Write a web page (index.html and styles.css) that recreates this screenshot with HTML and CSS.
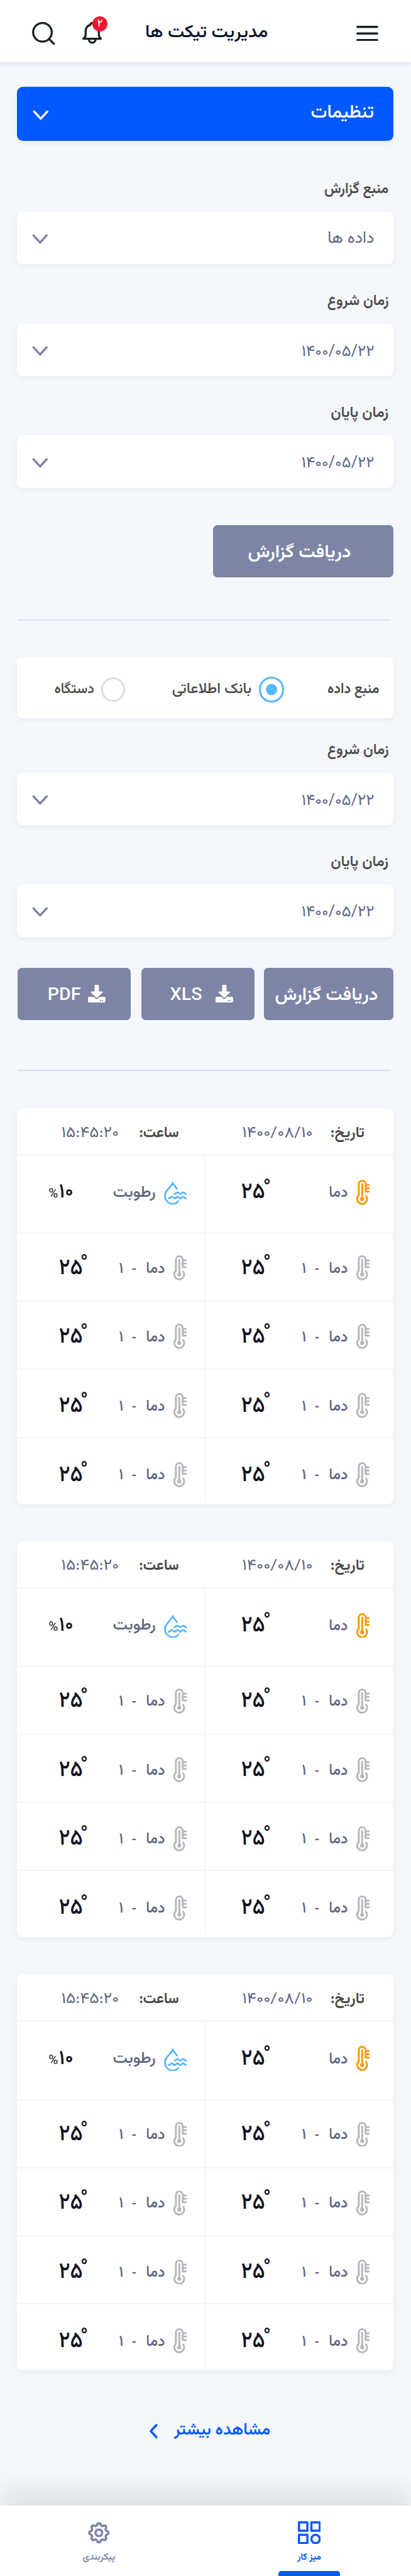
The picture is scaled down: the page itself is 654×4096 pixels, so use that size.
FILE: index.html
```html
<!DOCTYPE html>
<html lang="fa" dir="rtl">
<head>
<meta charset="utf-8">
<title>مدیریت تیکت ها</title>
<link rel="stylesheet" href="styles.css">
</head>
<body>
<svg class="sprite" aria-hidden="true">
  <symbol id="thermo" viewBox="0 0 110 206">
    <g fill="none" stroke="currentColor" stroke-width="15.5" stroke-linecap="round" stroke-linejoin="round">
      <path d="M80 133A40.5 40.5 0 1 1 20 127V36A28 28 0 0 1 76 36V97H102M76 41H102M76 69H102M48 36V157"/>
    </g>
    <circle cx="48" cy="157" r="16.5" fill="currentColor"/>
  </symbol>
  <symbol id="drop" viewBox="0 0 190 190">
    <g fill="none" stroke="currentColor" stroke-width="14.5" stroke-linecap="round" stroke-linejoin="round">
      <path d="M108 59L78 23Q72 15 72 8Q72 15 66 23L26 71Q8 93 8 117A64 64 0 0 0 119 162"/>
      <path d="M87 101C99 101 99 88 111 88S123 101 135 101S146 88 158 88S171 101 183 101"/>
      <path d="M39 138C51 138 52 124 64 124S75 138 87 138S99 124 111 124S123 138 135 138S146 124 158 124S171 138 183 138"/>
    </g>
  </symbol>
  <symbol id="chevron" viewBox="0 0 44 28">
    <path d="M4 4L22 23.500L40 4" fill="none" stroke="currentColor" stroke-width="6" stroke-linecap="round" stroke-linejoin="round"/>
  </symbol>
  <symbol id="download" viewBox="0 0 144 144">
    <path fill="currentColor" d="M60 0h24q6 0 6 6v48h25q9 2 3 10L76 104q-4 4-8 0L26 64q-6-8 3-10h25V6q0-6 6-6z"/>
    <path fill="currentColor" fill-rule="evenodd" d="M8 98h40l15 15q9 8 18 0l15-15h40q8 0 8 8v30q0 8-8 8H8q-8 0-8-8v-30q0-8 8-8zM97 130a5.500 5.500 0 1 0 11 0a5.500 5.500 0 1 0-11 0M114 130a5.500 5.500 0 1 0 11 0a5.500 5.500 0 1 0-11 0"/>
  </symbol>
</svg>

<header class="topbar">
  <svg class="menu" viewBox="0 0 60 42"><path d="M3 3H57M3 21H57M3 39H57" stroke="currentColor" stroke-width="6" stroke-linecap="round"/></svg>
  <h1 class="title fit" style="--w:33.2">مدیریت تیکت ها</h1>
  <div class="bell">
    <svg viewBox="0 0 162 180"><g fill="none" stroke="currentColor" stroke-width="17" stroke-linecap="round" stroke-linejoin="round"><path d="M81 9C70 9 66 18 64 24C40 32 27 52 27 78V105Q27 125 9 137H153Q136 125 136 105V78C136 52 122 32 98 24C96 18 92 9 81 9Z"/><path d="M54 142A27.500 28 0 0 0 109 142"/></g></svg>
    <span class="badge">۲</span>
  </div>
  <svg class="search" viewBox="0 0 190 190"><g fill="none" stroke="currentColor" stroke-width="17" stroke-linecap="round"><circle cx="86" cy="85" r="77"/><path d="M143 142L181 181"/></g></svg>
</header>

<main class="content">
  <button class="settings"><span class="fit" style="--w:16.9">تنظیمات</span><svg class="chev"><use href="#chevron"/></svg></button>

  <section class="filters">
    <label class="label fit" style="--w:17.3">منبع گزارش</label>
    <div class="field"><span class="fit" style="--w:12.4">داده ها</span><svg class="chev"><use href="#chevron"/></svg></div>
    <label class="label fit" style="--w:16.5">زمان شروع</label>
    <div class="field"><span class="date fit" style="--w:19.6">۱۴۰۰/۰۵/۲۲</span><svg class="chev"><use href="#chevron"/></svg></div>
    <label class="label fit" style="--w:15.5">زمان پایان</label>
    <div class="field"><span class="date fit" style="--w:19.6">۱۴۰۰/۰۵/۲۲</span><svg class="chev"><use href="#chevron"/></svg></div>
    <button class="btn btn-wide"><span class="fit" style="--w:27.8">دریافت گزارش</span></button>
  </section>

  <hr class="rule">

  <section class="source">
    <div class="radios">
      <span class="radios-title fit" style="--w:13.9">منبع داده</span>
      <span class="radio on"></span>
      <span class="radio-text fit" style="--w:21.4">بانک اطلاعاتی</span>
      <span class="radio"></span>
      <span class="radio-text fit" style="--w:10.6">دستگاه</span>
    </div>
    <label class="label fit" style="--w:16.5">زمان شروع</label>
    <div class="field"><span class="date fit" style="--w:19.6">۱۴۰۰/۰۵/۲۲</span><svg class="chev"><use href="#chevron"/></svg></div>
    <label class="label fit" style="--w:15.5">زمان پایان</label>
    <div class="field"><span class="date fit" style="--w:19.6">۱۴۰۰/۰۵/۲۲</span><svg class="chev"><use href="#chevron"/></svg></div>
    <div class="actions">
      <button class="btn btn-report"><span class="fit" style="--w:27.8">دریافت گزارش</span></button>
      <button class="btn btn-xls"><svg class="dl"><use href="#download"/></svg><span class="latin fit" style="--w:8.4">XLS</span></button>
      <button class="btn btn-pdf"><svg class="dl"><use href="#download"/></svg><span class="latin fit" style="--w:8.7">PDF</span></button>
    </div>
  </section>

  <hr class="rule rule-low">

  <div class="cards" id="cards"></div>

  <a class="more"><span class="fit" style="--w:26">مشاهده بیشتر</span><svg viewBox="0 0 24 40"><path d="M20.500 3.500L5 20L20.500 36.500" fill="none" stroke="currentColor" stroke-width="6" stroke-linecap="round" stroke-linejoin="round"/></svg></a>
</main>

<nav class="tabs">
  <a class="tab active">
    <svg viewBox="0 0 63 63"><g fill="none" stroke="currentColor" stroke-width="6" stroke-linejoin="round"><path d="M3 3H26V26H3ZM37 3H60V26H37ZM3 37H26V60H3Z"/><circle cx="48.500" cy="48.500" r="11.500"/></g></svg>
    <span class="fit" style="--w:6.3">میز کار</span>
  </a>
  <a class="tab">
    <svg viewBox="-31.500 -31.500 63 63"><g fill="none" stroke="currentColor" stroke-width="6.300" stroke-linejoin="round"><path d="M22.560-4.490A4.600 4.600 0 0 1 22.560 4.490A6 6 0 0 0 19.120 12.780A4.600 4.600 0 0 1 12.780 19.120A6 6 0 0 0 4.490 22.560A4.600 4.600 0 0 1-4.490 22.560A6 6 0 0 0-12.780 19.120A4.600 4.600 0 0 1-19.120 12.780A6 6 0 0 0-22.560 4.490A4.600 4.600 0 0 1-22.560-4.490A6 6 0 0 0-19.120-12.780A4.600 4.600 0 0 1-12.780-19.120A6 6 0 0 0-4.490-22.560A4.600 4.600 0 0 1 4.490-22.560A6 6 0 0 0 12.780-19.120A4.600 4.600 0 0 1 19.120-12.780A6 6 0 0 0 22.560-4.490Z"/><circle r="9"/></g></svg>
    <span class="fit" style="--w:8.7">پیکربندی</span>
  </a>
</nav>
<script src="app.js"></script>
</body>
</html>
```
FILE: styles.css
```css
/* 1rem = 10 design units */
html { font-size: 5.81px; }
* { box-sizing: border-box; margin: 0; padding: 0; }
body {
  width: 654px; height: 4096px; overflow: hidden;
  display: flex; flex-direction: column;
  background: #f4f7fc;
  font-family: Vazirmatn, "DejaVu Sans", sans-serif;
}
.sprite { position: absolute; width: 0; height: 0; }
svg, .fit { display: block; flex: none; }
button { border: 0; font-family: inherit; color: inherit; }
.fit { width: calc(var(--w) * 1rem); height: 5rem; line-height: 5rem; white-space: nowrap; }
.fit > span { display: inline-block; transform-origin: 100% 50%; }

.topbar {
  flex: none; height: 17.1rem; padding: 1.1rem 9rem 0 0;
  display: flex; align-items: center;
  background: #fff; color: #182126;
  box-shadow: 0 .6rem 1.5rem rgba(20, 30, 60, .13);
}
.menu { width: 6rem; height: 4.2rem; }
.title { margin: 0 24.4rem 0 12rem; font-size: 4.8rem; font-weight: 500; color: #020f2e; }
.bell { position: relative; width: 5.4rem; height: 6rem; margin-left: 7.5rem; }
.bell svg { width: 100%; height: 100%; }
.badge {
  position: absolute; left: 2.7rem; top: -1.7rem; width: 4.2rem; height: 4.2rem;
  border-radius: 50%; background: #f2142d; color: #fff;
  font-size: 2.8rem; line-height: 4.4rem; font-weight: 500; text-align: center;
}
.search { width: 6.3rem; height: 6.3rem; }

.content { flex: none; height: 668.7rem; padding: 6.7rem 4.8rem 0 4.7rem; display: flex; flex-direction: column; }
.settings {
  flex: none; height: 14.8rem; padding: 0 5.5rem .3rem 4.2rem; border-radius: 1.6rem;
  display: flex; align-items: center; justify-content: space-between;
  background: #0059ff; color: #fff; font-size: 5.1rem; font-weight: 500;
  box-shadow: 0 .6rem 1.5rem rgba(20, 30, 60, .06);
}
.chev { width: 4.4rem; height: 2.8rem; margin-top: .4rem; }
.settings .chev { margin-top: .9rem; }
.filters { margin-top: 10.8rem; display: flex; flex-direction: column; }
.label { margin: 7.7rem 1.5rem 3.5rem 0; font-size: 4.1rem; font-weight: 600; color: #4a4a4a; }
.filters > .label:first-child { margin-top: 0; }
.field {
  height: 14.4rem; padding: .3rem 5.5rem 0 4.1rem; border-radius: 1.5rem;
  display: flex; align-items: center; justify-content: space-between;
  background: #fff; color: #5f6582; font-size: 4.5rem;
  box-shadow: 0 .6rem 1.5rem rgba(20, 30, 60, .05);
}
.field .chev { color: #7d84a5; }
.date { margin-top: .76rem; font-size: 4.3rem; }
.btn {
  height: 14.4rem; border-radius: 1.2rem; padding-top: 1rem;
  display: flex; align-items: center;
  background: #7d84a5; color: #fff; font-size: 4.8rem; font-weight: 600;
}
.btn-wide { width: 49.5rem; margin-top: 10.2rem; padding-right: 11.4rem; }
.rule { flex: none; width: 102.2rem; height: 2px; margin: 11.4rem .7rem 10rem 0; border: 0; background: #d9dced; }

.source { display: flex; flex-direction: column; }
.radios {
  height: 16.8rem; padding: 1rem 4.1rem 0 0; border-radius: 1.5rem;
  display: flex; align-items: center;
  background: #fff; color: #4a4a4a; font-size: 4rem;
  box-shadow: 0 .6rem 1.5rem rgba(20, 30, 60, .05);
}
.radios-title { font-weight: 600; margin-left: 12rem; }
.radio { flex: none; width: 6.6rem; height: 6.6rem; border: .6rem solid #d9dced; border-radius: 50%; }
.radio.on {
  width: 6.9rem; height: 6.9rem; border-color: #57b6ff;
  background: radial-gradient(circle, #57b6ff 1.45rem, transparent 1.6rem);
}
.radio-text { font-weight: 500; margin: 0 2.1rem 0 13.1rem; }
.radios + .label { margin-top: 6.3rem; }
.actions { margin-top: 8.4rem; display: flex; }
.btn-report { width: 35.4rem; padding-right: 4rem; margin-left: 2.7rem; }
.btn-xls { width: 30.9rem; padding: 0 5.9rem 0 0; margin-left: 3rem; }
.btn-pdf { width: 30.9rem; padding: 0 6.8rem 0 0; }
.dl { width: 4.8rem; height: 4.8rem; margin-left: 3.8rem; }
.btn-pdf .dl { margin-left: 2.3rem; }
.latin { font-family: Roboto, sans-serif; font-weight: 500; }
.rule-low { margin: 13.6rem .7rem 10.1rem 0; }

.cards { display: flex; flex-direction: column; gap: 10.15rem; }
.card-wrap { border-radius: 1.6rem; box-shadow: 0 .6rem 1.5rem rgba(20, 30, 60, .05); }
.card {
  height: 108.4rem; border-radius: 1.6rem; background: #fff; overflow: hidden;
  display: flex; flex-direction: column;
}
.head {
  flex: none; height: 12.9rem; padding: 1.3rem 8.1rem 0 0; border-bottom: 2px solid #f4f5fa;
  display: flex; align-items: center; font-size: 4.2rem; color: #5f6582;
}
.head strong { font-size: 4.1rem; font-weight: 700; color: #4a4a4a; margin-left: 5.2rem; }
.head .clock { margin-left: 5.8rem; }
.head strong + .fit { margin-left: 17.7rem; }
.head .clock + .fit { margin-left: 0; }
.row { flex: none; height: 18.6rem; display: flex; border-bottom: 2px solid #f4f5fa; }
.row:nth-child(2) { height: 21.6rem; }
.row:last-child { height: 17.3rem; border-bottom: 0; }
.cell { flex: none; width: 50%; display: flex; align-items: flex-start; padding: 5.8rem 6.5rem 0 10rem; color: #5f6582; }
.cell + .cell { border-right: 2px solid #f4f5fa; padding-right: 4.7rem; padding-left: 11.6rem; }
.row:nth-child(2) .cell { padding-top: 6.7rem; }
.row:nth-child(4) .cell { padding-top: 6rem; }
.row:nth-child(5) .cell { padding-top: 6.3rem; }
.row:nth-child(6) .cell { padding-top: 6.6rem; }
.row .cell.wet { padding-left: 8.8rem; }
.thermo { width: 3.67rem; height: 6.87rem; color: #b6b7bd; margin-left: 2.5rem; }
.thermo.hot { color: #ff9800; }
.drop { width: 6.3rem; height: 6.3rem; color: #57b6ff; margin: .6rem 0 0 2.4rem; }
.drop + .name { margin-top: 1.2rem; }
.name { margin-top: 1.3rem; font-size: 4.2rem; font-weight: 500; }
.dash { margin-right: 2.8rem; }
.num { margin-right: 2.6rem; }
.value { display: flex; margin-right: auto; color: #10121f; font-size: 6.1rem; font-weight: 500; }
.value .fit { margin-top: 1.15rem; }
.value .deg { margin: -.1rem 0 0 -.1rem; font-size: 5.8rem; }
.wet .value { font-size: 5.5rem; }
.value .pct { margin: 1.3rem .6rem 0 0; font: 3.6rem/5rem Roboto, sans-serif; }

.more {
  flex: none; margin: 13.9rem 33.9rem 0 0; display: flex; align-items: center;
  color: #0059ff; font-size: 4.5rem; font-weight: 600;
}
.more svg { width: 2.4rem; height: 4rem; margin: .4rem 4.6rem 0 0; }

.tabs {
  flex: none; height: 19.2rem; padding-right: 19.5rem; background: #fff;
  display: flex; gap: 40.8rem;
  box-shadow: 0 -5rem 7rem rgba(30, 30, 30, .09);
}
.tab {
  width: 16.8rem; padding-top: 4.2rem; display: flex; flex-direction: column; align-items: center;
  color: #7d84a5; font-size: 2.6rem; font-weight: 600;
}
.tab svg { width: 6.3rem; height: 6.3rem; }
.tab .fit { margin-top: 1.2rem; }
.tab.active { color: #0059ff; font-weight: 700; }
.tab.active::after {
  content: ""; align-self: stretch; height: 1.3rem; margin-top: auto;
  border-radius: .8rem .8rem 0 0; background: #0059ff;
}
```
FILE: app.js
```js
// Sensor cards
const fit = (text, w, cls = '') => `<span class="${cls} fit" style="--w:${w}">${text}</span>`;
const icon = (id, cls) => `<svg class="${cls}"><use href="#${id}"/></svg>`;
const degrees = '<span class="value">' + fit('°', 1.68, 'deg') + fit('۲۵', 6.1) + '</span>';

const plain = `<div class="cell">${icon('thermo', 'thermo')}${fit('دما', 4.9, 'name')}${fit('-', 1.1, 'name dash')}${fit('۱', 0.9, 'name num')}${degrees}</div>`;
const hot = `<div class="cell">${icon('thermo', 'thermo hot')}${fit('دما', 4.9, 'name')}${degrees}</div>`;
const wet = `<div class="cell wet">${icon('drop', 'drop')}${fit('رطوبت', 11.4, 'name')}<span class="value">${fit('۱۰', 3.5)}${fit('%', 2.3, 'pct')}</span></div>`;

const card = `<div class="card-wrap"><article class="card">
  <div class="head"><strong class="fit" style="--w:9">تاریخ:</strong>${fit('۱۴۰۰/۰۸/۱۰', 19)}
  <strong class="clock fit" style="--w:10.6">ساعت:</strong>${fit('۱۵:۴۵:۲۰', 15.4)}</div>
  <div class="row">${hot}${wet}</div>
  ${`<div class="row">${plain}${plain}</div>`.repeat(4)}
</article></div>`;
document.getElementById('cards').innerHTML = card.repeat(3);

// Scale every label horizontally so its strokes, without side bearings, span its column width
document.querySelectorAll('.fit').forEach((el) => {
  const inner = document.createElement('span');
  inner.textContent = el.textContent;
  el.replaceChildren(inner);
  const bearing = parseFloat(getComputedStyle(el).fontSize) * 0.04;
  const wanted = el.getBoundingClientRect().width;
  const scale = wanted / (inner.getBoundingClientRect().width - 2 * bearing);
  inner.style.transform = `translateX(${bearing * scale}px) scaleX(${scale})`;
});
```
